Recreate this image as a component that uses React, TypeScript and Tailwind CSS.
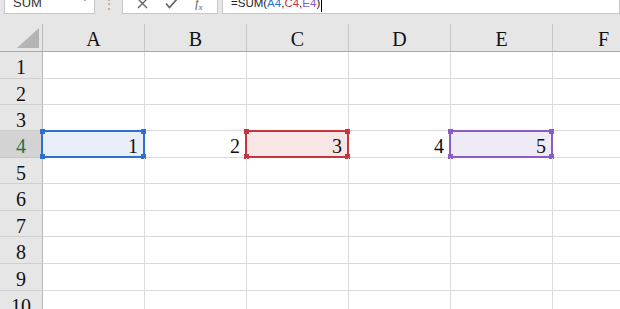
import React from "react";

const cols = ["A", "B", "C", "D", "E", "F"];
const rowHeights = [27, 26, 26, 27, 26, 27, 26, 27, 27, 26];

const sel: Record<string, { border: string; bg: string; handle: string }> = {
  "A4": { border: "border-[#2f6fd2]", bg: "bg-[#e8eff9]", handle: "bg-[#2f6fd2]" },
  "C4": { border: "border-[#c7343c]", bg: "bg-[#f8e6e7]", handle: "bg-[#c7343c]" },
  "E4": { border: "border-[#8c5cc4]", bg: "bg-[#efebf6]", handle: "bg-[#8c5cc4]" },
};

const values: Record<string, string> = { A4: "1", B4: "2", C4: "3", D4: "4", E4: "5" };

const Handle = ({ pos, color }: { pos: string; color: string }) => (
  <span className={`absolute w-[5px] h-[5px] ${color} ${pos}`} />
);

const Cell = ({ id }: { id: string }) => {
  const s = sel[id];
  const v = values[id];
  return (
    <div className="relative w-[102px] shrink-0 h-full border-r border-[#dadada] flex items-center justify-end pr-[6px]">
      {s && (
        <div className={`absolute -left-[2px] -top-[1px] -right-[1px] -bottom-[1px] border-2 ${s.border} ${s.bg}`}>
          <Handle pos="-left-[3px] -top-[3px]" color={s.handle} />
          <Handle pos="-right-[3px] -top-[3px]" color={s.handle} />
          <Handle pos="-left-[3px] -bottom-[3px]" color={s.handle} />
          <Handle pos="-right-[3px] -bottom-[3px]" color={s.handle} />
        </div>
      )}
      {v && <span className="relative text-[20px] leading-none pt-[4px] text-[#111]">{v}</span>}
    </div>
  );
};

export default function App() {
  return (
    <div
      className="w-[620px] h-[309px] overflow-hidden bg-white"
      style={{ fontFamily: '"Liberation Serif", "Times New Roman", serif' }}
    >
      {/* formula bar */}
      <div className="h-[24px] bg-[#e6e6e6] overflow-hidden">
        <div
          className="flex items-stretch -mt-[10px] h-[24px]"
          style={{ fontFamily: '"Liberation Sans", Arial, sans-serif' }}
        >
          <div className="ml-[4px] w-[91px] shrink-0 bg-white border border-[#c6c6c6] flex items-center justify-between pl-[8px] pr-[5px] text-[13px] text-[#333]">
            <span className="pt-[2px]">SUM</span>
            <span className="w-0 h-0 border-l-[4px] border-r-[4px] border-t-[4px] border-l-transparent border-r-transparent border-t-[#555] mb-[6px]" />
          </div>
          <div className="w-[27px] shrink-0 flex items-center justify-center text-[#9a9a9a] text-[12px] pt-[4px]">⋮</div>
          <div className="w-[96px] shrink-0 bg-white border border-[#c6c6c6] flex items-center justify-around px-[6px]">
            <svg width="11" height="11" viewBox="0 0 11 11" className="mt-[2px]">
              <path d="M1 1 L10 10 M10 1 L1 10" stroke="#666" strokeWidth="1.4" fill="none" />
            </svg>
            <svg width="13" height="11" viewBox="0 0 13 11" className="mt-[2px]">
              <path d="M1 5.5 L4.5 9.5 L12 1" stroke="#666" strokeWidth="1.8" fill="none" />
            </svg>
            <span className="text-[13px] italic text-[#666] pt-[2px]" style={{ fontFamily: '"Liberation Serif", serif' }}>
              f<sub className="text-[9px]">x</sub>
            </span>
          </div>
          <div className="ml-[4px] flex-1 bg-white border border-[#c6c6c6] flex items-center pl-[8px] text-[11.5px]">
            <span className="pt-[3px] text-[#222]">
              =SUM(<span className="text-[#2f6fd2]">A4</span>,<span className="text-[#c7343c]">C4</span>,
              <span className="text-[#8c5cc4]">E4</span>)
            </span>
            <span className="w-[1px] h-[14px] bg-black ml-[1px] mt-[5px]" />
          </div>
        </div>
      </div>

      {/* column header */}
      <div className="flex h-[28px] bg-[#e6e6e6] border-b border-[#a9a9a9]">
        <div className="w-[43px] shrink-0 border-r border-[#b9b9b9] relative">
          <span className="absolute right-[3px] bottom-[3px] w-0 h-0 border-b-[20px] border-l-[22px] border-b-[#b4b4b4] border-l-transparent" />
        </div>
        {cols.map((c) => (
          <div
            key={c}
            className="w-[102px] shrink-0 border-r border-[#c8c8c8] flex items-center justify-center text-[20px] text-[#111] pt-[3px]"
          >
            {c}
          </div>
        ))}
      </div>

      {/* rows */}
      {rowHeights.map((h, i) => {
        const r = i + 1;
        const active = r === 4;
        return (
          <div key={r} className="flex" style={{ height: h }}>
            <div
              className={`w-[43px] shrink-0 flex items-center justify-center text-[20px] pt-[4px] border-b border-r ${
                active
                  ? "bg-[#d3d3d3] text-[#217346] border-r-[#217346] border-b-[#c4c4c4]"
                  : "bg-[#e6e6e6] text-[#111] border-r-[#b9b9b9] border-b-[#cfcfcf]"
              }`}
            >
              {r}
            </div>
            <div className="flex border-b border-[#dadada] h-full">
              {cols.map((c) => (
                <Cell key={c} id={`${c}${r}`} />
              ))}
            </div>
          </div>
        );
      })}
    </div>
  );
}
